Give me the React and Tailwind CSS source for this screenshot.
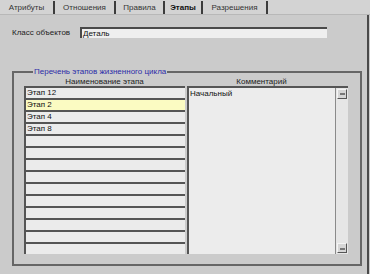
import React from "react";

const tabs = [
  { label: "Атрибуты", w: "w-[55px]" },
  { label: "Отношения", w: "w-[61px]" },
  { label: "Правила", w: "w-[49px]" },
  { label: "Этапы", w: "w-[38px]", active: true },
  { label: "Разрешения", w: "w-[65px]" },
];

const stages = ["Этап 12", "Этап 2", "Этап 4", "Этап 8"];
const rows = Array.from({ length: 14 }, (_, i) => stages[i] || "");

function ScrollButton({ up }) {
  return (
    <div className="h-[10px] mx-[1px] bg-[#d6d6d6] border-t border-l border-[#f4f4f4] border-r border-b border-r-[#555] border-b-[#555] flex items-center justify-center">
      <span className="block w-[5px] h-[2px] bg-[#777]" style={{ marginTop: up ? 0 : 1 }} />
    </div>
  );
}

export default function App() {
  return (
    <div className="w-[370px] h-[274px] bg-[#cbcbcb] flex flex-col font-['Liberation_Sans',Arial,sans-serif] text-[8px] leading-[10px] text-[#1e1e1e]">
      {/* Tabs */}
      <div className="h-[15px] flex bg-[#d3d3d3] border-b border-[#b8b8b8]">
        {tabs.map((t) => (
          <div
            key={t.label}
            className={`${t.w} h-[13px] mt-[1px] flex items-center justify-center border-r-2 border-[#3c3c3c] ${
              t.active ? "font-bold text-[#111]" : "text-[#333]"
            }`}
          >
            {t.label}
          </div>
        ))}
      </div>

      <div className="flex-1 flex">
        <div className="flex-1 flex flex-col pl-[12px] pr-[5px]">
          {/* Class row */}
          <div className="mt-[12px] flex items-center h-[11px]">
            <div className="w-[68px] text-[#222]">Класс объектов</div>
            <div className="w-[247px] h-[11px] bg-[#efefef] border-t-2 border-l-2 border-[#4a4a4a] flex items-center pl-[1px] text-[#111]">
              Деталь
            </div>
          </div>

          {/* Group box */}
          <fieldset className="mt-[29px] w-[350px] border-2 border-[#666] pl-[10px] pr-[12px] pb-[10px]">
            <legend className="ml-[9px] px-[1px] text-[#2c2ca8] leading-[10px]">
              Перечень этапов жизненного цикла
            </legend>
            <div className="grid grid-cols-2 gap-x-[2px]">
              <div className="h-[9px] flex items-center justify-center text-[#222]">
                Наименование этапа
              </div>
              <div className="h-[9px] flex items-center justify-center pr-[12px] text-[#222]">
                Комментарий
              </div>

              <div className="flex flex-col">
                {rows.map((r, i) => (
                  <div
                    key={i}
                    className={`h-[12px] border-t-2 border-l-2 border-[#555] flex items-center pl-[1px] text-[#111] ${
                      i === 1 ? "bg-[#fbfbc2]" : "bg-[#ebebeb]"
                    }`}
                  >
                    {r}
                  </div>
                ))}
              </div>

              <div className="h-[168px] flex border-t-2 border-l-2 border-[#555] bg-[#ececec]">
                <div className="flex-1 pl-[1px] pt-[1px] text-[#111]">Начальный</div>
                <div className="w-[13px] flex flex-col justify-between border-l border-[#8a8a8a] bg-[#e6e6e6] py-[1px]">
                  <ScrollButton up />
                  <ScrollButton />
                </div>
              </div>
            </div>
          </fieldset>
        </div>
        <div className="w-[2px] bg-[#4a4a4a]" />
        <div className="w-[1px]" />
      </div>
    </div>
  );
}
